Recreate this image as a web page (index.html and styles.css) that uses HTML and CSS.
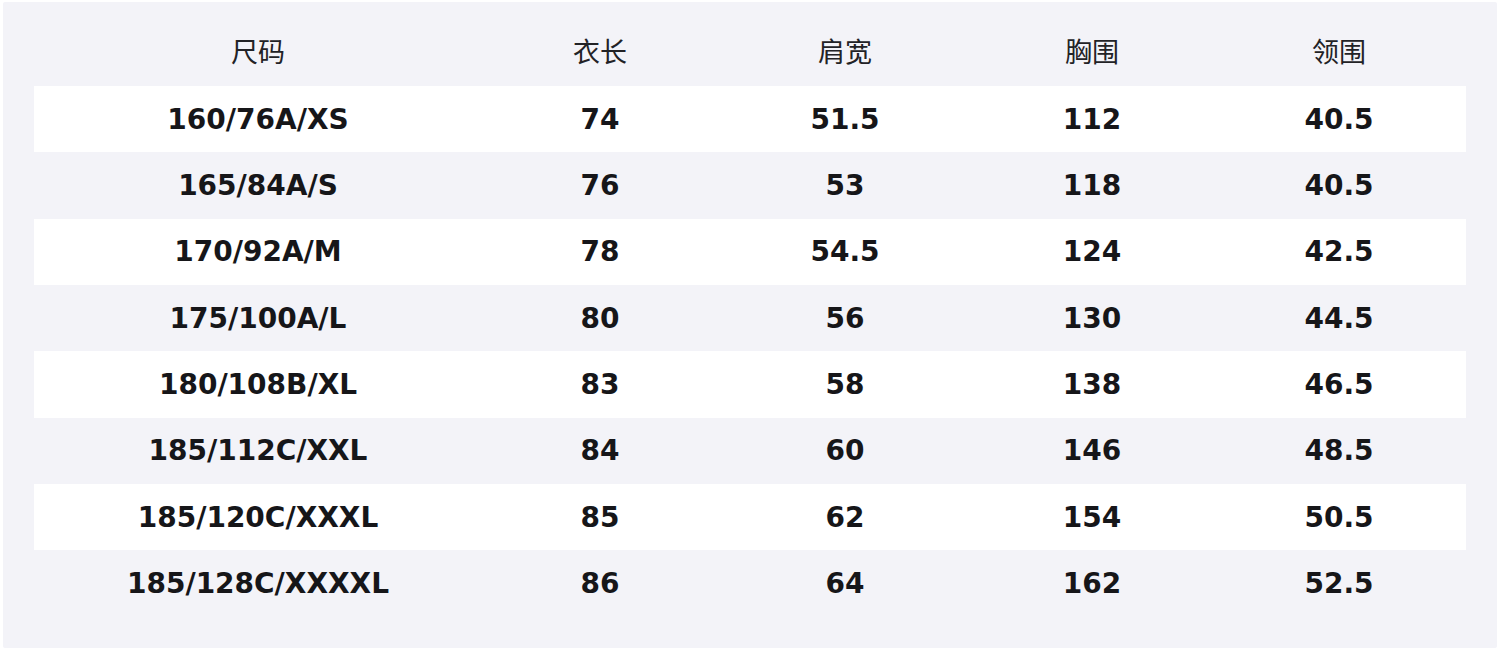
FILE: index.html
```html
<!DOCTYPE html>
<html lang="zh-CN">
<head>
<meta charset="utf-8">
<title>尺码表</title>
<link rel="stylesheet" href="styles.css">
</head>
<body>
<div class="wrap">
  <div class="panel">
    <div class="row head">
      <div>尺码</div><div>衣长</div><div>肩宽</div><div>胸围</div><div>领围</div>
    </div>
    <div class="row odd"><div>160/76A/XS</div><div>74</div><div>51.5</div><div>112</div><div>40.5</div></div>
    <div class="row"><div>165/84A/S</div><div>76</div><div>53</div><div>118</div><div>40.5</div></div>
    <div class="row odd"><div>170/92A/M</div><div>78</div><div>54.5</div><div>124</div><div>42.5</div></div>
    <div class="row"><div>175/100A/L</div><div>80</div><div>56</div><div>130</div><div>44.5</div></div>
    <div class="row odd"><div>180/108B/XL</div><div>83</div><div>58</div><div>138</div><div>46.5</div></div>
    <div class="row"><div>185/112C/XXL</div><div>84</div><div>60</div><div>146</div><div>48.5</div></div>
    <div class="row odd"><div>185/120C/XXXL</div><div>85</div><div>62</div><div>154</div><div>50.5</div></div>
    <div class="row"><div>185/128C/XXXXL</div><div>86</div><div>64</div><div>162</div><div>52.5</div></div>
  </div>
</div>
</body>
</html>
```
FILE: styles.css
```css
html, body {
  margin: 0;
  padding: 0;
  background: #ffffff;
}
.wrap {
  padding: 2px 3px 3px 3px;
  height: 651px;
  box-sizing: border-box;
}
.panel {
  background: #f3f3f8;
  height: 100%;
  box-sizing: border-box;
  padding: 18px 31px 31px 31px;
  border-radius: 2px;
}
.row {
  display: grid;
  grid-template-columns: 448px 236px 254px 240px 254px;
  height: 66.33px;
  align-items: center;
  text-align: center;
  font-family: "DejaVu Sans", "Noto Sans CJK SC", sans-serif;
  font-weight: bold;
  font-size: 28px;
  color: #161619;
}
.row.head {
  height: 66px;
  box-sizing: border-box;
  padding-bottom: 5px;
  font-family: "Noto Sans CJK SC", "Noto Sans", sans-serif;
  font-weight: normal;
  font-size: 27px;
  color: #222226;
}
.row.odd {
  background: #ffffff;
}
```
